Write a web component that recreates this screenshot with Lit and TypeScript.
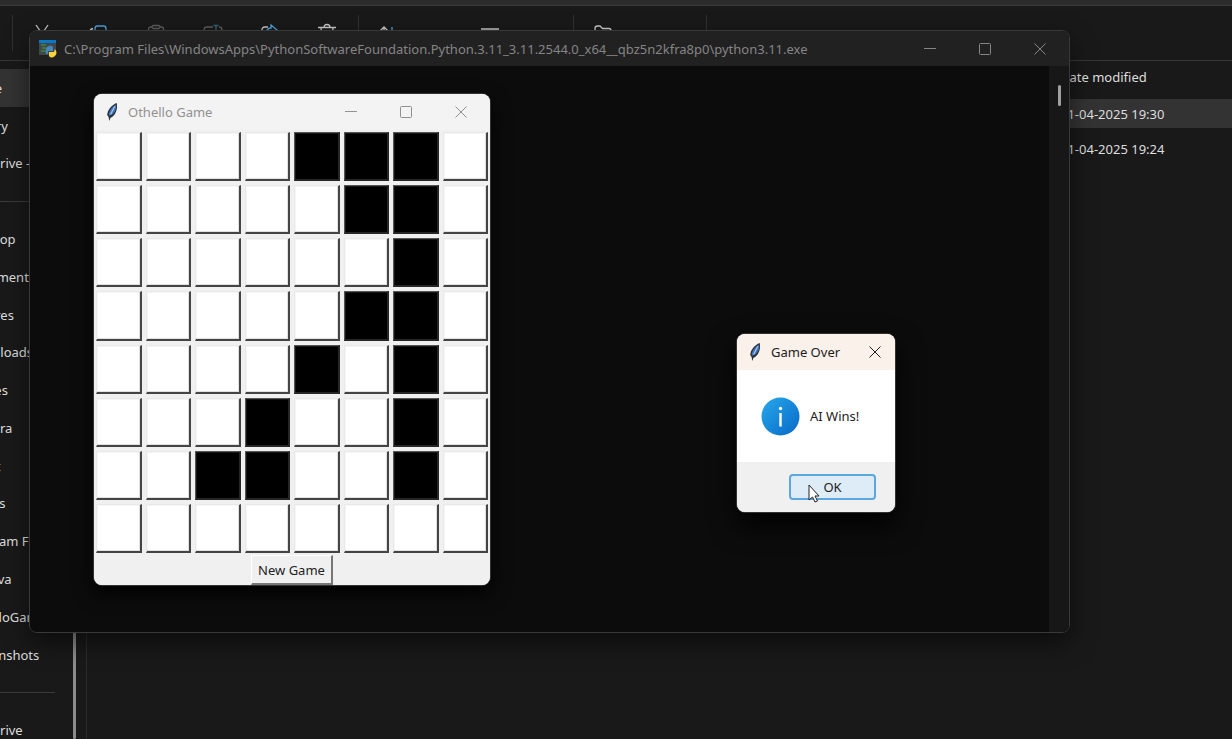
import { LitElement, html, css, svg } from "lit";
import { customElement, property } from "lit/decorators.js";

const sans = css`"Noto Sans", "Open Sans", sans-serif`;

const glyphs = {
  cut: svg`<path d="M4 2l9 13M16 2L7 15" stroke="#c8c8c8"/><circle cx="6" cy="17" r="2.2" stroke="#4aa3df"/><circle cx="14" cy="17" r="2.2" stroke="#4aa3df"/>`,
  copy: svg`<path d="M1 15V9q0-3 3-3.500" stroke="#c8c8c8"/><rect x="6" y="3" width="11" height="14" rx="2.500" stroke="#4aa3df"/>`,
  paste: svg`<path d="M6 4H4.500a2 2 0 0 0-2 2v12h15V6a2 2 0 0 0-2-2H14" stroke="#5c5c5c"/><rect x="6" y="2.500" width="8" height="3" rx="1.500" stroke="#5c5c5c"/>`,
  rename: svg`<path d="M10 4H4q-3 0-3 3v7q0 3 3 3h6M16 4q3 0 3 3v7q0 3-3 3" stroke="#5c5c5c"/><path d="M10.500 2.500h5M13 2.500v15" stroke="#35607a"/>`,
  share: svg`<path d="M8 4H5Q2 4 2 7v10h13v-4" stroke="#c8c8c8"/><path d="M11 2l6 5-6 5V9q-4 0-5 3 0-7 5-7z" stroke="#4aa3df"/>`,
  trash: svg`<path d="M1 4.500h18M7 4.500q0-3 3-3t3 3M4 5l1 13h10l1-13" stroke="#c8c8c8"/>`,
  sort: svg`<path d="M6 18V4M2.500 7.500L6 4l3.500 3.500" stroke="#c8c8c8"/><path d="M14 4v14M10.500 14.500L14 18l3.500-3.500" stroke="#4aa3df"/>`,
  view: svg`<path d="M1 6h18M1 11h18M1 16h18" stroke="#c8c8c8"/>`,
  extract: svg`<path d="M2 17V5.500Q2 3 4.500 3H7l2.500 2.500H16q2 0 2 2V17z" stroke="#c8c8c8"/>`,
};

const feather = svg`<path d="M12 0C7 2 2 7 2 13l1.500 2L4 19l1.500-3.500C10 14 13.500 7 12 0z" fill="#2b3138"/><path d="M11.500 1.500C7 4 3.500 8 3.500 13.500 9 12.500 12 7 11.500 1.500z" fill="#3f74bd"/><path d="M10 3.500L5.500 12" stroke="#a9c6e8" stroke-width="1.200"/>`;

@customElement("window-frame")
export class WindowFrame extends LitElement {
  @property() caption = "";
  @property() icon = "feather";
  @property({ type: Boolean }) closeOnly = false;

  static styles = css`
    :host { display: flex; flex-direction: column; overflow: hidden; border-radius: 8px; box-sizing: border-box; }
    .bar { display: flex; align-items: center; flex: none; height: var(--bar-height, 36px); padding-right: 2px; color: var(--ink); background: var(--bar); }
    .logo { flex: none; width: 18px; height: 18px; margin: 0 7px 0 9px; }
    .caption { flex: 1; min-width: 0; margin: 0; font: 400 13px/20px ${sans}; white-space: nowrap; overflow: hidden; }
    .control { flex: none; width: 55px; height: 100%; padding: 0; border: 0; background: none; color: inherit; display: grid; place-items: center; }
    .control svg { width: 12px; height: 12px; }
    .close-only { width: 36px; }
    svg { fill: none; }
  `;

  private logo() {
    return this.icon === "feather"
      ? html`<svg class="logo" viewBox="-1 0 16 19">${feather}</svg>`
      : html`<svg class="logo" viewBox="0 0 18 18"><path d="M0 0h17v15H0z" fill="#42484a"/><path d="M0 0h17v3H0z" fill="#0878c8"/><path d="M2 5h5M3 8h4M2 11h5" stroke="#39a447"/><path d="M8 7q4-3 6 0v4H9v3H7q-1-5 1-7z" fill="#4687bb"/><path d="M16 9q3 4 0 7-4 3-6 0v-4h5z" fill="#f5d33c"/></svg>`;
  }

  render() {
    return html`
      <header class="bar">
        ${this.logo()}
        <h2 class="caption">${this.caption}</h2>
        ${this.closeOnly ? "" : html`
          <button class="control" aria-label="Minimize"><svg viewBox="0 0 12 12"><path d="M0 5.500h12" stroke="currentColor"/></svg></button>
          <button class="control" aria-label="Maximize"><svg viewBox="0 0 12 12"><rect x=".5" y=".5" width="11" height="11" rx="1" stroke="currentColor"/></svg></button>`}
        <button class="control ${this.closeOnly ? "close-only" : ""}" aria-label="Close"><svg viewBox="0 0 12 12"><path d="M.5.5l11 11M11.500.5l-11 11" stroke="currentColor"/></svg></button>
      </header>
      <slot></slot>`;
  }
}

@customElement("file-explorer")
export class FileExplorer extends LitElement {
  static styles = css`
    :host { display: flex; flex-direction: column; height: 100%; background: #191919; color: #dedede; font: 13px/20px ${sans}; overflow: hidden; }
    .address { flex: none; height: 5px; background: #2c2c2c; border-bottom: 1px solid #3a3a3a; }
    .tools { flex: none; display: flex; align-items: center; height: 54px; border-bottom: 1px solid #363636; padding-left: 12px; white-space: nowrap; overflow: hidden; }
    .rule { width: 1px; height: 36px; background: #303030; }
    .tool { display: flex; align-items: center; justify-content: center; gap: 12px; padding: 0; border: 0; background: none; color: inherit; font: inherit; }
    .tool svg { width: 20px; height: 20px; fill: none; }
    .label { padding-top: 3px; }
    .actions { display: grid; grid-template-columns: repeat(6, 57px); width: 345px; }
    .sort, .view, .extract { justify-content: flex-start; box-sizing: border-box; padding-left: 19px; }
    .sort { width: 102px; }
    .view { width: 112px; }
    .extract { width: 132px; }
    .body { flex: 1; min-height: 0; display: grid; grid-template-columns: 87px 1fr; }
    .side { display: flex; min-height: 0; border-right: 1px solid #2b2b2b; overflow: hidden; }
    .places { flex: none; width: 72px; box-sizing: border-box; display: grid; grid-auto-rows: 1fr; margin: 8px 1px -10px 0; padding: 0; list-style: none; white-space: nowrap; }
    .place { display: flex; align-items: center; overflow: hidden; }
    .place a { margin-left: -35px; color: inherit; text-decoration: none; }
    .current { background: #333; }
    .split::before { content: ""; width: 55px; height: 1px; background: #3a3a3a; }
    .track { width: 3px; background: #8c8c8c; border-radius: 2px; }
    .files { justify-self: end; width: 172px; border-collapse: collapse; align-self: start; }
    .files th, .files td { padding: 0; font-weight: 400; text-align: left; white-space: nowrap; }
    .files th { height: 32px; }
    .files td { height: 29px; }
    .files .gap td { height: 6px; }
    .picked { background: #333; }
  `;

  private places = ["Home", "Gallery", "OneDrive - Personal", "", "Desktop", "Documents", "Pictures", "Downloads", "Movies", "Camera", "Music", "Videos", "Program Files", "My Java", "OthelloGame", "Screenshots", "", "OneDrive"];

  private icon(name: keyof typeof glyphs) {
    return html`<svg viewBox="0 0 20 20" stroke-width="1.300">${glyphs[name]}</svg>`;
  }

  render() {
    return html`
      <div class="address"></div>
      <div class="tools">
        <span class="rule"></span>
        <div class="actions">
          ${(["cut", "copy", "paste", "rename", "share", "trash"] as const).map((n) => html`<button class="tool" aria-label=${n}>${this.icon(n)}</button>`)}
        </div>
        <span class="rule"></span>
        <button class="tool sort">${this.icon("sort")}<span class="label">Sort</span></button>
        <button class="tool view">${this.icon("view")}<span class="label">View</span></button>
        <span class="rule"></span>
        <button class="tool extract">${this.icon("extract")}<span class="label">Extract all</span></button>
        <span class="rule"></span>
      </div>
      <div class="body">
        <nav class="side">
          <ul class="places">
            ${this.places.map((p, i) => p
              ? html`<li class="place ${i === 0 ? "current" : ""}"><a href="#">${p}</a></li>`
              : html`<li class="place split"></li>`)}
          </ul>
          <span class="track"></span>
        </nav>
        <table class="files">
          <thead><tr><th>Date modified</th></tr></thead>
          <tbody>
            <tr class="gap"><td></td></tr>
            <tr class="picked"><td>21-04-2025 19:30</td></tr>
            <tr class="gap"><td></td></tr>
            <tr><td>21-04-2025 19:24</td></tr>
          </tbody>
        </table>
      </div>`;
  }
}

@customElement("othello-board")
export class OthelloBoard extends LitElement {
  static styles = css`
    :host { flex: 1; min-height: 0; display: flex; flex-direction: column; background: #f0f0f0; }
    .grid { flex: 1; min-height: 0; display: grid; grid-template: repeat(8, minmax(0, 1fr)) / repeat(8, minmax(0, 1fr)); gap: 4px; padding: 2px; }
    .cell { padding: 0; background: #fff; border: 1px solid #e9e9e9; border-right: 2px solid #444; border-bottom: 2px solid #444; box-shadow: inset -1px -1px #e0e0e0, inset 1px 1px #f6f6f6; border-radius: 0; }
    .dark { background: #000; border: 1px solid #555; border-right: 2px solid #262626; border-bottom: 2px solid #262626; box-shadow: inset 1px 1px #151515; }
    .foot { flex: none; display: flex; justify-content: center; height: 30px; }
    .new { height: 30px; padding: 0 6px; font: 13px/20px ${sans}; color: #222; background: #f0f0f0; border: 1px solid #fff; border-right: 2px solid #777; border-bottom: 2px solid #777; border-radius: 0; }
  `;

  private rows = ["....###.", ".....##.", "......#.", ".....##.", "....#.#.", "...#..#.", "..##..#.", "........"];

  render() {
    return html`
      <div class="grid">
        ${this.rows.map((row, r) => [...row].map((c, i) => html`<button class="cell ${c === "#" ? "dark" : ""}" aria-label="Row ${r + 1}, column ${i + 1}"></button>`))}
      </div>
      <div class="foot"><button class="new">New Game</button></div>`;
  }
}

@customElement("app-root")
export class AppRoot extends LitElement {
  static styles = css`
    :host { display: block; position: relative; height: 100vh; overflow: hidden; font-family: ${sans}; }
    .console { position: absolute; inset: 30px 162px 106px 29px; --bar: #212121; --ink: #858585; --bar-height: 35px; border: 1px solid #393939; background: #0c0c0c; box-shadow: 0 10px 24px rgb(0 0 0 / 0.5); }
    .screen { flex: 1; display: flex; justify-content: flex-end; background: #0c0c0c; }
    .gutter { width: 20px; background: #171717; display: flex; justify-content: center; padding-top: 19px; box-sizing: border-box; }
    .thumb { width: 3px; height: 21px; border-radius: 2px; background: #a0a0a0; }
    .game { position: absolute; left: 94px; top: 94px; width: 396px; height: 491px; --bar: #f3f3f3; --ink: #919191; background: #f0f0f0; box-shadow: 0 0 0 1px #333, 0 8px 20px #000; }
    .dialog { position: absolute; left: 737px; top: 334px; width: 158px; height: 178px; --bar: #f9f1ea; --ink: #1c1c1c; background: #fff; box-shadow: 0 0 0 1px #333, 0 12px 28px #000; }
    .message { flex: 1; display: flex; align-items: center; gap: 10px; padding-left: 24px; color: #222; font-size: 13px; line-height: 18px; }
    .message p { margin: 0; }
    .info { width: 39px; height: 39px; }
    .buttons { flex: none; display: flex; justify-content: flex-end; align-items: center; height: 50px; padding-right: 19px; background: #f0f0f0; }
    .ok { width: 87px; height: 26px; padding: 0; border: 2px solid #5ba7df; border-radius: 4px; background: #deecf8; color: #222; font: 13px/18px ${sans}; }
    .pointer { position: absolute; left: 808px; top: 484px; width: 12px; height: 19px; }
  `;

  render() {
    return html`
      <file-explorer></file-explorer>
      <window-frame class="console" icon="terminal" caption="C:\\Program Files\\WindowsApps\\PythonSoftwareFoundation.Python.3.11_3.11.2544.0_x64__qbz5n2kfra8p0\\python3.11.exe">
        <div class="screen"><div class="gutter"><span class="thumb"></span></div></div>
      </window-frame>
      <window-frame class="game" caption="Othello Game"><othello-board></othello-board></window-frame>
      <window-frame class="dialog" caption="Game Over" closeOnly>
        <div class="message">
          <svg class="info" viewBox="0 0 39 39">
            <defs><linearGradient id="disc" x2="1" y2="1"><stop stop-color="#28a8ea"/><stop offset="1" stop-color="#0669c9"/></linearGradient></defs>
            <circle cx="19.500" cy="19.500" r="19" fill="url(#disc)"/>
            <circle cx="19.500" cy="11.500" r="1.700" fill="#fff"/><path d="M19.500 16v13.500" stroke="#fff" stroke-width="2.400"/>
          </svg>
          <p>AI Wins!</p>
        </div>
        <div class="buttons"><button class="ok">OK</button></div>
      </window-frame>
      <svg class="pointer" viewBox="0 0 12 19"><path d="M1 1v15l3.500-3 2.500 5 2.500-1-2.500-5H11z" fill="#fff" stroke="#222"/></svg>`;
  }
}
